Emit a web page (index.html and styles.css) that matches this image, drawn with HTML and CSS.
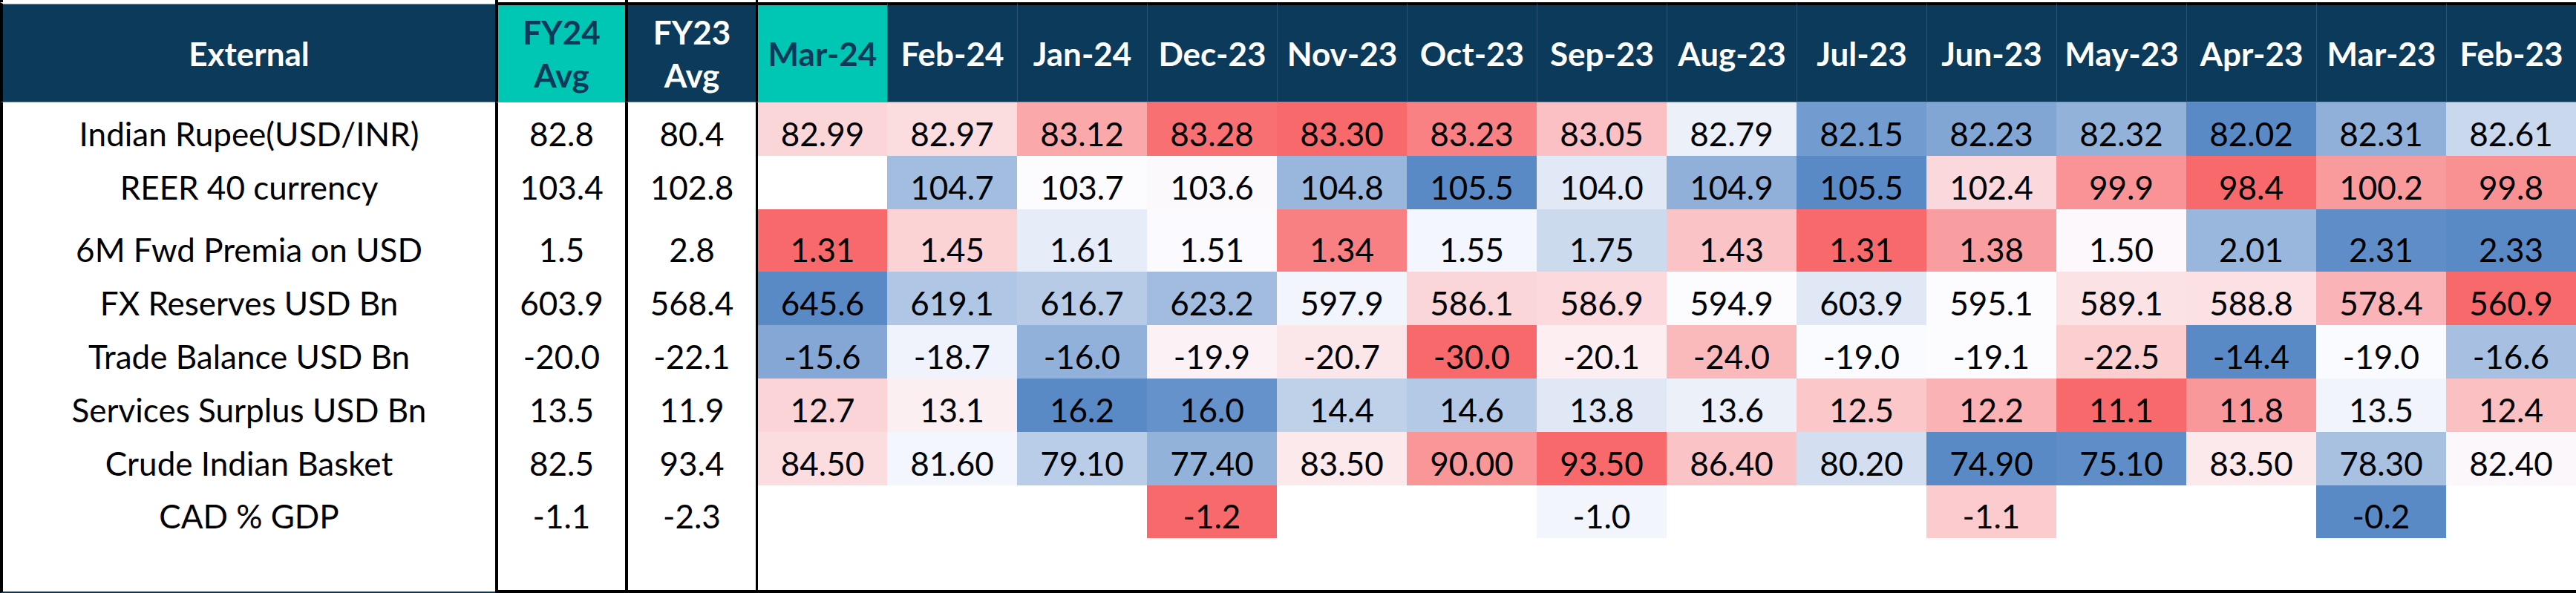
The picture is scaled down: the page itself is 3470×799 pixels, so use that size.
FILE: index.html
```html
<!DOCTYPE html>
<html lang="en">
<head>
<meta charset="utf-8">
<title>External</title>
<link rel="stylesheet" href="styles.css">
</head>
<body>
<div class="sheet">
  <div class="row top">
    <div class="c lab"></div><div class="c fy"></div><div class="c fy"></div><div class="c m1 span"></div>
  </div>
  <div class="row head">
    <div class="h lab">External</div>
    <div class="h fy teal">FY24<br>Avg</div>
    <div class="h fy">FY23<br>Avg</div>
    <div class="h m1 teal">Mar-24</div>
    <div class="h m">Feb-24</div>
    <div class="h m">Jan-24</div>
    <div class="h m">Dec-23</div>
    <div class="h m">Nov-23</div>
    <div class="h m">Oct-23</div>
    <div class="h m">Sep-23</div>
    <div class="h m">Aug-23</div>
    <div class="h m">Jul-23</div>
    <div class="h m">Jun-23</div>
    <div class="h m">May-23</div>
    <div class="h m">Apr-23</div>
    <div class="h m">Mar-23</div>
    <div class="h m">Feb-23</div>
  </div>
  <div class="row r" data-high="red">
    <div class="c lab">Indian Rupee(USD/INR)</div><div class="c fy">82.8</div><div class="c fy">80.4</div>
    <div class="c v m1">82.99</div><div class="c v">82.97</div><div class="c v">83.12</div><div class="c v">83.28</div><div class="c v">83.30</div><div class="c v">83.23</div><div class="c v">83.05</div><div class="c v">82.79</div><div class="c v">82.15</div><div class="c v">82.23</div><div class="c v">82.32</div><div class="c v">82.02</div><div class="c v">82.31</div><div class="c v">82.61</div>
  </div>
  <div class="row r" data-high="blue">
    <div class="c lab">REER 40 currency</div><div class="c fy">103.4</div><div class="c fy">102.8</div>
    <div class="c v m1"></div><div class="c v">104.7</div><div class="c v">103.7</div><div class="c v">103.6</div><div class="c v">104.8</div><div class="c v">105.5</div><div class="c v">104.0</div><div class="c v">104.9</div><div class="c v">105.5</div><div class="c v">102.4</div><div class="c v">99.9</div><div class="c v">98.4</div><div class="c v">100.2</div><div class="c v">99.8</div>
  </div>
  <div class="row r tall" data-high="blue">
    <div class="c lab">6M Fwd Premia on USD</div><div class="c fy">1.5</div><div class="c fy">2.8</div>
    <div class="c v m1">1.31</div><div class="c v">1.45</div><div class="c v">1.61</div><div class="c v">1.51</div><div class="c v">1.34</div><div class="c v">1.55</div><div class="c v">1.75</div><div class="c v">1.43</div><div class="c v">1.31</div><div class="c v">1.38</div><div class="c v">1.50</div><div class="c v">2.01</div><div class="c v">2.31</div><div class="c v">2.33</div>
  </div>
  <div class="row r" data-high="blue">
    <div class="c lab">FX Reserves USD Bn</div><div class="c fy">603.9</div><div class="c fy">568.4</div>
    <div class="c v m1">645.6</div><div class="c v">619.1</div><div class="c v">616.7</div><div class="c v">623.2</div><div class="c v">597.9</div><div class="c v">586.1</div><div class="c v">586.9</div><div class="c v">594.9</div><div class="c v">603.9</div><div class="c v">595.1</div><div class="c v">589.1</div><div class="c v">588.8</div><div class="c v">578.4</div><div class="c v">560.9</div>
  </div>
  <div class="row r" data-high="blue">
    <div class="c lab">Trade Balance USD Bn</div><div class="c fy">-20.0</div><div class="c fy">-22.1</div>
    <div class="c v m1">-15.6</div><div class="c v">-18.7</div><div class="c v">-16.0</div><div class="c v">-19.9</div><div class="c v">-20.7</div><div class="c v">-30.0</div><div class="c v">-20.1</div><div class="c v">-24.0</div><div class="c v">-19.0</div><div class="c v">-19.1</div><div class="c v">-22.5</div><div class="c v">-14.4</div><div class="c v">-19.0</div><div class="c v">-16.6</div>
  </div>
  <div class="row r" data-high="blue">
    <div class="c lab">Services Surplus USD Bn</div><div class="c fy">13.5</div><div class="c fy">11.9</div>
    <div class="c v m1">12.7</div><div class="c v">13.1</div><div class="c v">16.2</div><div class="c v">16.0</div><div class="c v">14.4</div><div class="c v">14.6</div><div class="c v">13.8</div><div class="c v">13.6</div><div class="c v">12.5</div><div class="c v">12.2</div><div class="c v">11.1</div><div class="c v">11.8</div><div class="c v">13.5</div><div class="c v">12.4</div>
  </div>
  <div class="row r" data-high="red">
    <div class="c lab">Crude Indian Basket</div><div class="c fy">82.5</div><div class="c fy">93.4</div>
    <div class="c v m1">84.50</div><div class="c v">81.60</div><div class="c v">79.10</div><div class="c v">77.40</div><div class="c v">83.50</div><div class="c v">90.00</div><div class="c v">93.50</div><div class="c v">86.40</div><div class="c v">80.20</div><div class="c v">74.90</div><div class="c v">75.10</div><div class="c v">83.50</div><div class="c v">78.30</div><div class="c v">82.40</div>
  </div>
  <div class="row r short" data-high="blue">
    <div class="c lab">CAD % GDP</div><div class="c fy">-1.1</div><div class="c fy">-2.3</div>
    <div class="c v m1"></div><div class="c v"></div><div class="c v"></div><div class="c v">-1.2</div><div class="c v"></div><div class="c v"></div><div class="c v">-1.0</div><div class="c v"></div><div class="c v"></div><div class="c v">-1.1</div><div class="c v"></div><div class="c v"></div><div class="c v">-0.2</div><div class="c v"></div>
  </div>
  <div class="row blank">
    <div class="c lab"></div><div class="c fy"></div><div class="c fy"></div><div class="c m1 span"></div>
  </div>
</div>
<script src="script.js"></script>
</body>
</html>
```

FILE: styles.css
```css
* { box-sizing: border-box; }
html, body {
  margin: 0;
  padding: 0;
  background: #ffffff;
}
body {
  width: 3470px;
  height: 799px;
  overflow: hidden;
  font-family: Lato, "Liberation Sans", sans-serif;
  color: #000;
}
.sheet {
  display: flex;
  flex-direction: column;
  width: 3470px;
}
.row {
  display: grid;
  grid-template-columns: 667px 175px 176px 177px repeat(13, 175px);
}
.row.top { height: 3px; }
.row.head { height: 135px; }
.row.r { height: 72px; }
.row.r.tall { height: 84px; }
.row.r.short { height: 71px; }
.row.blank { height: 74px; }

.span { grid-column: 4 / -1; }

.c {
  display: flex;
  justify-content: center;
  align-items: flex-end;
  padding-bottom: 8px;
  font-size: 44px;
  line-height: 44px;
  white-space: nowrap;
}
.lab { border-left: 4px solid #000; }
.fy { border-left: 4px solid #000; }
.m1 { border-left: 3px solid #000; }

.blank .c { border-bottom: 4px solid #000; }
.blank .c.lab { border-bottom: 2px solid #0b3a5b; }

.h {
  display: flex;
  align-items: center;
  justify-content: center;
  text-align: center;
  background: #0b3a5b;
  color: #ffffff;
  font-weight: 700;
  font-size: 44px;
  line-height: 58px;
  border-top: 4px solid #000;
  border-bottom: 1px solid #7d93a7;
  white-space: nowrap;
}
.h.lab {
  border-top: 2px solid #ffffff;
  box-shadow: inset 0 1px 0 #8e9ba7;
  padding-top: 1px;
}
.h.m { border-left: 1px solid #2a5374; }
.h.teal {
  background: #00c7b3;
  color: #0b3a5b;
}
```

FILE: script.js
```js
(function () {
  var RED = [248, 105, 107];
  var MID = [252, 252, 255];
  var BLUE = [90, 138, 198];
  function mix(a, b, t) {
    return 'rgb(' + a.map(function (v, i) { return Math.round(v + (b[i] - v) * t); }).join(',') + ')';
  }
  function pct50(sorted) {
    var n = sorted.length;
    var k = (n - 1) * 0.5;
    var lo = Math.floor(k), hi = Math.ceil(k);
    return sorted[lo] + (sorted[hi] - sorted[lo]) * (k - lo);
  }
  var rows = document.querySelectorAll('.row[data-high]');
  Array.prototype.forEach.call(rows, function (row) {
    var highIsRed = row.getAttribute('data-high') === 'red';
    var hiC = highIsRed ? RED : BLUE;
    var loC = highIsRed ? BLUE : RED;
    var cells = Array.prototype.filter.call(row.querySelectorAll('.v'), function (c) {
      return c.textContent.trim() !== '';
    });
    var vals = cells.map(function (c) { return parseFloat(c.textContent); });
    var sorted = vals.slice().sort(function (a, b) { return a - b; });
    var min = sorted[0], max = sorted[sorted.length - 1], mid = pct50(sorted);
    cells.forEach(function (c, i) {
      var v = vals[i], col;
      if (v <= mid) {
        col = mid === min ? mix(MID, MID, 0) : mix(loC, MID, (v - min) / (mid - min));
      } else {
        col = max === mid ? mix(MID, MID, 0) : mix(MID, hiC, (v - mid) / (max - mid));
      }
      c.style.backgroundColor = col;
    });
  });
})();
```
